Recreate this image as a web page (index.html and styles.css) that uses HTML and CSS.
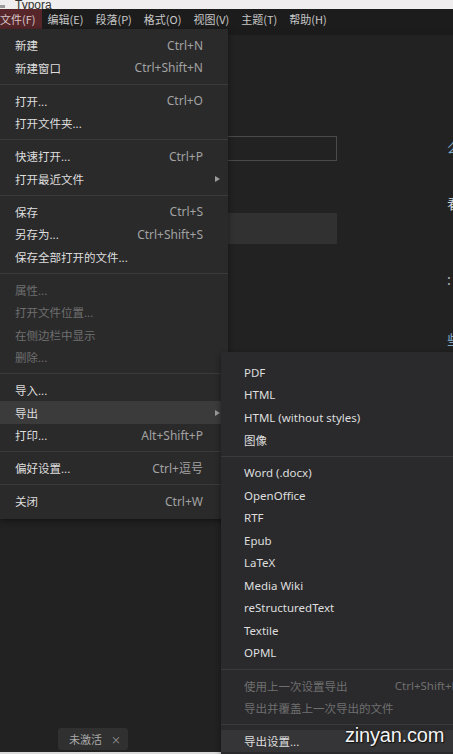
FILE: index.html
```html
<!DOCTYPE html>
<html lang="zh-CN">
<head>
<meta charset="utf-8">
<title>Typora</title>
<link rel="stylesheet" href="styles.css">
</head>
<body>
<div class="titlebar"><span class="app-icon"></span><span class="app-name">Typora</span></div>
<nav class="menubar">
  <span class="mb-item active">文件(F)</span>
  <span class="mb-item">编辑(E)</span>
  <span class="mb-item">段落(P)</span>
  <span class="mb-item">格式(O)</span>
  <span class="mb-item">视图(V)</span>
  <span class="mb-item">主题(T)</span>
  <span class="mb-item">帮助(H)</span>
</nav>
<main class="workspace">
  <section class="editor">
    <div class="editor-body">
      <div class="form-col">
        <div class="field-outline"></div>
        <div class="field-filled"></div>
      </div>
      <div class="clip-col">
        <span class="clip c1">么</span>
        <span class="clip c2">看</span>
        <span class="clip c3">:</span>
        <span class="clip c4">些</span>
      </div>
    </div>
    <div class="status-row">
      <span class="badge">未激活<span class="badge-x">×</span></span>
    </div>
  </section>

  <div class="menu file-menu">
    <div class="mi"><span class="lbl">新建</span><span class="sc">Ctrl+N</span></div>
    <div class="mi"><span class="lbl">新建窗口</span><span class="sc">Ctrl+Shift+N</span></div>
    <div class="sep"></div>
    <div class="mi"><span class="lbl">打开...</span><span class="sc">Ctrl+O</span></div>
    <div class="mi"><span class="lbl">打开文件夹...</span></div>
    <div class="sep"></div>
    <div class="mi"><span class="lbl">快速打开...</span><span class="sc">Ctrl+P</span></div>
    <div class="mi"><span class="lbl">打开最近文件</span><span class="arrow"></span></div>
    <div class="sep"></div>
    <div class="mi"><span class="lbl">保存</span><span class="sc">Ctrl+S</span></div>
    <div class="mi"><span class="lbl">另存为...</span><span class="sc">Ctrl+Shift+S</span></div>
    <div class="mi"><span class="lbl">保存全部打开的文件...</span></div>
    <div class="sep"></div>
    <div class="mi dis"><span class="lbl">属性...</span></div>
    <div class="mi dis"><span class="lbl">打开文件位置...</span></div>
    <div class="mi dis"><span class="lbl">在侧边栏中显示</span></div>
    <div class="mi dis"><span class="lbl">删除...</span></div>
    <div class="sep"></div>
    <div class="mi"><span class="lbl">导入...</span></div>
    <div class="mi hover"><span class="lbl">导出</span><span class="arrow"></span></div>
    <div class="mi"><span class="lbl">打印...</span><span class="sc">Alt+Shift+P</span></div>
    <div class="sep"></div>
    <div class="mi"><span class="lbl">偏好设置...</span><span class="sc">Ctrl+逗号</span></div>
    <div class="sep"></div>
    <div class="mi"><span class="lbl">关闭</span><span class="sc">Ctrl+W</span></div>
  </div>

  <div class="menu export-menu">
    <div class="mi"><span class="lbl">PDF</span></div>
    <div class="mi"><span class="lbl">HTML</span></div>
    <div class="mi"><span class="lbl">HTML (without styles)</span></div>
    <div class="mi"><span class="lbl">图像</span></div>
    <div class="sep"></div>
    <div class="mi"><span class="lbl">Word (.docx)</span></div>
    <div class="mi"><span class="lbl">OpenOffice</span></div>
    <div class="mi"><span class="lbl">RTF</span></div>
    <div class="mi"><span class="lbl">Epub</span></div>
    <div class="mi"><span class="lbl">LaTeX</span></div>
    <div class="mi"><span class="lbl">Media Wiki</span></div>
    <div class="mi"><span class="lbl">reStructuredText</span></div>
    <div class="mi"><span class="lbl">Textile</span></div>
    <div class="mi"><span class="lbl">OPML</span></div>
    <div class="sep"></div>
    <div class="mi dis"><span class="lbl">使用上一次设置导出</span><span class="sc">Ctrl+Shift+E</span></div>
    <div class="mi dis"><span class="lbl">导出并覆盖上一次导出的文件</span></div>
    <div class="sep"></div>
    <div class="mi hover"><span class="lbl">导出设置...</span></div>
  </div>
</main>
<div class="taskbar-edge"></div>
<div class="watermark">zinyan.com</div>
</body>
</html>
```
FILE: styles.css
```css
* { box-sizing: border-box; }
html, body {
  margin: 0;
  padding: 0;
}
body {
  width: 453px;
  height: 754px;
  overflow: hidden;
  background: #1f1f1f;
  font-family: "Noto Sans", "Noto Sans CJK SC", sans-serif;
  font-size: 11.5px;
  color: #d8d8d8;
  position: relative;
  display: flex;
  flex-direction: column;
}

.titlebar {
  height: 9px;
  background: #efeded;
  overflow: hidden;
  display: flex;
  align-items: center;
  flex: none;
}
.app-icon {
  width: 5px;
  height: 3px;
  background: #9a9a9a;
  align-self: flex-end;
  margin-bottom: 1px;
}
.app-name {
  font-family: "Liberation Sans", sans-serif;
  font-size: 12px;
  line-height: 9px;
  height: 9px;
  color: #333;
  margin-left: 10px;
  padding-top: 1px;
}

.menubar {
  height: 20px;
  flex: none;
  display: flex;
  align-items: stretch;
  background: #1c1c1c;
  margin-left: -7px;
  font-family: "Noto Sans CJK SC", sans-serif;
  font-size: 11px;
  color: #c9c9c9;
}
.mb-item {
  display: flex;
  align-items: center;
  padding: 0 6px;
}
.mb-item.active {
  background: #56262a;
  padding-right: 6px;
  padding-left: 7px;
  color: #d8c8c8;
}

.workspace {
  position: relative;
  height: 723px;
  flex: none;
}

.editor {
  height: 100%;
  display: flex;
  flex-direction: column;
  background: linear-gradient(#1b1b1b 0, #1b1b1b 6px, #222 6px);
}
.editor-body {
  flex: 1;
  display: flex;
  overflow: hidden;
}
.form-col {
  flex: none;
  width: 337px;
  padding-left: 120px;
  padding-top: 107px;
}
.field-outline {
  height: 25px;
  border: 1px solid #4a4a4a;
}
.field-filled {
  margin-top: 52px;
  height: 31px;
  background: #313131;
}
.clip-col {
  flex: none;
  margin-left: 110px;
  display: flex;
  flex-direction: column;
  font-family: "Noto Sans CJK SC", sans-serif;
  font-size: 14px;
  line-height: 16px;
  white-space: nowrap;
}
.clip { display: block; }
.c1 { margin-top: 110px; color: #7fa6c4; }
.c2 { margin-top: 40px; color: #cfd4d8; }
.c3 { margin-top: 60px; color: #aab0b4; }
.c4 { margin-top: 44px; color: #7fa6c4; }

.status-row {
  height: 24px;
  padding-left: 58px;
  display: flex;
  align-items: flex-start;
}
.badge {
  width: 70px;
  height: 22px;
  background: #303030;
  border-radius: 3px;
  color: #a9a9a9;
  font-family: "Noto Sans CJK SC", sans-serif;
  font-size: 11px;
  display: flex;
  align-items: center;
  padding-left: 11px;
}
.badge-x {
  margin-left: 9px;
  font-size: 10px;
  color: #9a9a9a;
}

.taskbar-edge {
  height: 2px;
  background: #d9d9d9;
  flex: none;
}

/* menus */
.menu {
  position: absolute;
  background: #2a2a2b;
  box-shadow: 0 2px 6px rgba(0,0,0,0.45);
  font-family: "Noto Sans", "Noto Sans CJK SC", sans-serif;
  font-size: 11.5px;
}
.file-menu {
  left: 0;
  top: 0;
  width: 228px;
  padding: 4.75px 0 7px 0;
}
.file-menu .sc { font-size: 12px; }
.export-menu {
  left: 221px;
  top: 323px;
  width: 262px;
  padding: 8.75px 0 0 0;
  height: 410px;
  background: #2a2a2c;
}
.mi {
  height: 22.5px;
  display: flex;
  align-items: center;
  padding: 0 8px 0 15px;
  color: #dedede;
  white-space: nowrap;
}
.export-menu .mi { padding-left: 23px; }
.mi .lbl { flex: 1; }
.mi .sc {
  color: #a2a2a2;
  margin-right: 17px;
}
.mi.dis, .mi.dis .sc { color: #6f6f6f; }
.mi.hover { background: #3b3b3c; }
.export-menu .mi.hover { background: #353537; }
.arrow {
  width: 0;
  height: 0;
  border-top: 3.5px solid transparent;
  border-bottom: 3.5px solid transparent;
  border-left: 5px solid #9c9c9c;
  margin-right: 0;
}
.sep {
  height: 1px;
  margin: 4.75px 0;
  background: #3a3a3b;
}

.watermark {
  position: absolute;
  left: 345px;
  top: 724px;
  font-family: "Liberation Sans", sans-serif;
  font-size: 20px;
  line-height: 22px;
  color: #f4f4f4;
  text-shadow: 0 0 2px rgba(0,0,0,0.8), 1px 1px 1px rgba(0,0,0,0.6);
  letter-spacing: -0.2px;
}
```
